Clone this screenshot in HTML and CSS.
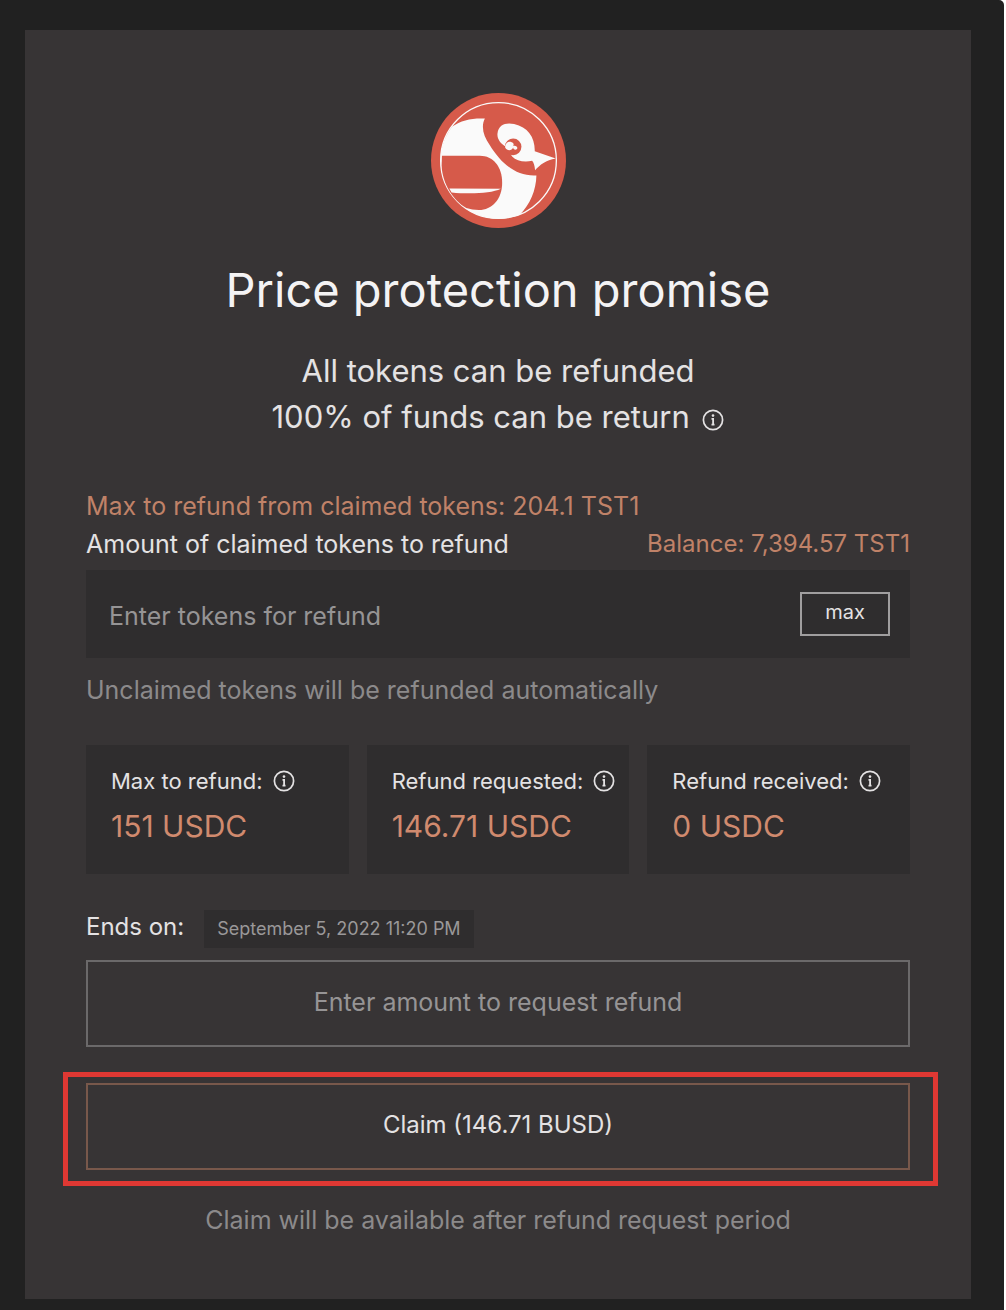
FILE: index.html
```html
<!DOCTYPE html>
<html lang="en">
<head>
<meta charset="utf-8">
<meta name="viewport" content="width=device-width, initial-scale=1">
<title>Price protection promise</title>
<link rel="stylesheet" href="styles.css">
</head>
<body>
<svg class="sprite" aria-hidden="true">
  <symbol id="info" viewBox="0 0 22 22">
    <circle cx="11" cy="11" r="9.6" fill="none" stroke="currentColor" stroke-width="1.7"/>
    <circle cx="11" cy="6.6" r="1.3" fill="currentColor"/>
    <path d="M9.5 9.8h1.6v6M9.5 15.6h3" fill="none" stroke="currentColor" stroke-width="1.8"/>
  </symbol>
</svg>
<div class="page">
  <main class="card">
    <svg class="logo" viewBox="33 38 406 406" role="img" aria-label="Bird logo">
      <circle cx="236" cy="241" r="203" fill="#d65a4a"/>
      <circle cx="236" cy="241" r="174" fill="none" stroke="#fafafa" stroke-width="4"/>
      <path fill="#fafafa" d="M97 139C123 120 158 113 195 115C183 139 190 166 210 195C240 244 286 290 350 286C349 330 331 373 300 404A174 174 0 0 1 62 241C62 202 75 167 97 139Z"/>
      <path fill="#d65a4a" d="M66 227H180C220 227 247 260 247 308C247 358 216 390 177 390C163 390 151 388 139 384C101 362 67 312 65 256Z"/>
      <path fill="#fafafa" d="M88 325L243 326C213 341 145 342 95 337Z"/>
      <path fill="#fafafa" d="M233 160C236 132 258 126 283 131C324 140 346 171 345 213L408 235C379 239 360 255 346 270C345 257 342 247 337 242C313 248 290 242 277 229L258 200C242 190 231 176 233 160Z"/>
      <circle cx="280" cy="200" r="25" fill="#d65a4a"/>
      <path fill="#fafafa" d="M256 202C255 190 264 183 274 185C283 187 283 195 279 198C286 194 295 199 292 206C288 211 280 208 280 202C276 212 262 213 256 202Z"/>
    </svg>
    <h1 class="title">Price protection promise</h1>
    <p class="lead">All tokens can be refunded<br>100% of funds can be return <svg class="info"><use href="#info"/></svg></p>

    <form class="refund">
      <p class="accent limit">Max to refund from claimed tokens: 204.1 TST1</p>
      <div class="row">
        <label for="tokens">Amount of claimed tokens to refund</label>
        <span class="accent balance">Balance: 7,394.57 TST1</span>
      </div>
      <div class="field">
        <input id="tokens" class="input" type="text" placeholder="Enter tokens for refund">
        <button class="max" type="button">max</button>
      </div>
      <p class="note">Unclaimed tokens will be refunded automatically</p>

      <div class="stats">
        <section class="stat">
          <h2 class="stat-name">Max to refund: <svg class="info"><use href="#info"/></svg></h2>
          <p class="stat-value">151 USDC</p>
        </section>
        <section class="stat">
          <h2 class="stat-name">Refund requested: <svg class="info"><use href="#info"/></svg></h2>
          <p class="stat-value">146.71 USDC</p>
        </section>
        <section class="stat">
          <h2 class="stat-name">Refund received: <svg class="info"><use href="#info"/></svg></h2>
          <p class="stat-value">0 USDC</p>
        </section>
      </div>

      <div class="ends">
        <span>Ends on:</span>
        <time class="date" datetime="2022-09-05T23:20">September 5, 2022 11:20 PM</time>
      </div>
      <button class="button" type="submit">Enter amount to request refund</button>
      <div class="claim">
        <button class="button button-claim" type="button">Claim (146.71 BUSD)</button>
      </div>
      <p class="note note-claim">Claim will be available after refund request period</p>
    </form>
  </main>
</div>
</body>
</html>
```
FILE: styles.css
```css
* {
  box-sizing: border-box;
}

body {
  margin: 0;
  background: #fff;
  color: #e4e2e3;
  font-family: Inter, "Liberation Sans", sans-serif;
  font-size: 25px;
  line-height: 38px;
}

h1, h2, p {
  margin: 0;
  font-weight: 400;
}

button, input {
  font: inherit;
  color: inherit;
  border-radius: 0;
}

.sprite {
  display: none;
}

.page {
  min-height: 100vh;
  margin-right: 2px;
  padding: 30px 33px 11px 25px;
  background: #212121;
  border-top-right-radius: 5px;
}

.card {
  padding: 63px 61px 60px;
  background: #373435;
  text-align: center;
}

.logo {
  display: block;
  width: 135px;
  height: 135px;
  margin: 0 auto;
}

.title {
  margin-top: 34px;
  font-size: 47px;
  line-height: 56px;
  color: #f4f3f4;
}

.lead {
  margin-top: 30px;
  font-size: 31px;
  line-height: 46px;
}

.info {
  width: 22px;
  height: 22px;
  flex: none;
}

.lead .info {
  margin-left: 4px;
  vertical-align: -3px;
}

.refund {
  margin-top: 47px;
  text-align: left;
}

.accent {
  color: #c08268;
}

.row {
  display: flex;
  justify-content: space-between;
}

.balance,
.ends {
  font-size: 24px;
}

.field {
  display: flex;
  align-items: center;
  height: 88px;
  margin-top: 7px;
  padding: 0 20px 0 23px;
  background: #2f2d2e;
}

.input {
  flex: 1;
  min-width: 0;
  height: 100%;
  padding: 4px 0 0;
  border: 0;
  outline: 0;
  background: none;
}

.input::placeholder {
  color: #969495;
  opacity: 1;
}

.max {
  width: 90px;
  height: 44px;
  padding: 0 0 4px;
  border: 2px solid #a09e9f;
  background: none;
  font-size: 20px;
  line-height: 24px;
}

.note {
  margin-top: 13px;
  color: #8c8a8b;
}

.stats {
  display: grid;
  grid-template-columns: repeat(3, 1fr);
  gap: 18px;
  margin-top: 36px;
}

.stat {
  padding: 21px 0 30px 25px;
  background: #2f2d2e;
}

.stat-name {
  display: flex;
  align-items: center;
  gap: 10px;
  font-size: 22px;
  line-height: 30px;
  white-space: nowrap;
}

.stat-value {
  margin-top: 12px;
  font-size: 30px;
  line-height: 36px;
  color: #d08a6e;
}

.ends {
  display: flex;
  align-items: center;
  gap: 20px;
  height: 38px;
  margin-top: 36px;
}

.ends > span {
  padding-bottom: 4px;
}

.date {
  padding: 0 13px;
  background: #2f2d2e;
  color: #9a9899;
  font-size: 18px;
}

.button {
  display: block;
  width: 100%;
  height: 87px;
  padding: 0 0 4px;
  border: 2px solid #6b696a;
  background: none;
  color: #969495;
}

.ends + .button {
  margin-top: 12px;
}

.claim {
  margin: 25px -28px 0 -23px;
  padding: 6px 23px 11px 18px;
  border: 5px solid #df3833;
}

.button-claim {
  border-color: #78584b;
  color: #e4e2e3;
  font-size: 24px;
}

.note-claim {
  margin-top: 15px;
  text-align: center;
}
```
